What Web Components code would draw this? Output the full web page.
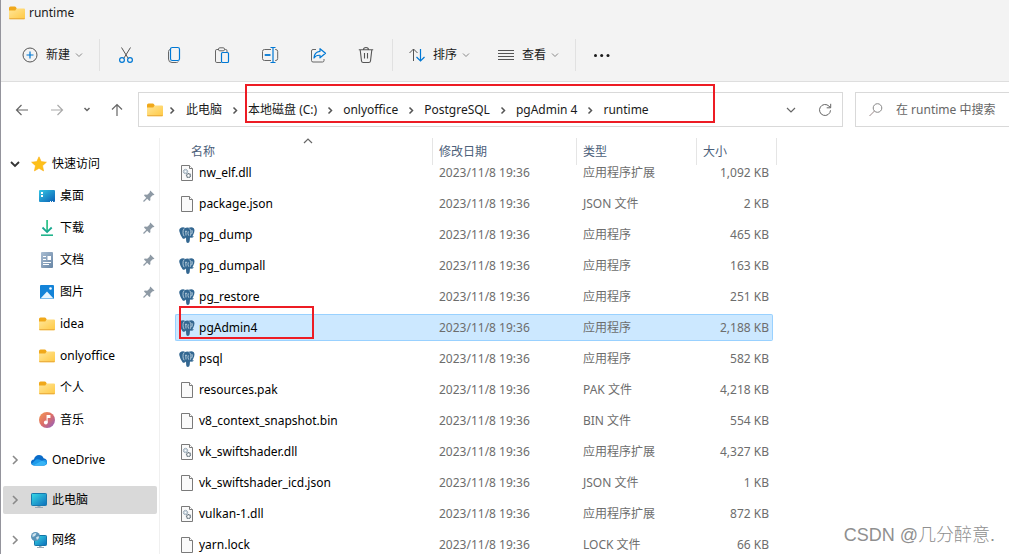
<!DOCTYPE html>
<html lang="zh-CN">
<head>
<meta charset="utf-8">
<title>runtime</title>
<style>
html, body { margin: 0; height: 100%; }
body {
  font: 12px/18px "Noto Sans", "Noto Sans CJK SC", sans-serif;
  color: #1a1a1a; background: #fff; overflow: hidden;
}
</style>
</head>
<body>
<file-explorer></file-explorer>

<script>
const RESET = `
  *, *::before, *::after { box-sizing: border-box; }
  button { font: inherit; color: inherit; background: none; border: 0; padding: 0; margin: 0; }
  a { color: inherit; text-decoration: none; }
`;

const PAGE = '<path d="M2.500.5h8l3 3v12h-11z" fill="#fafafa" stroke="#7a7a7a"/><path d="M10.500.5v3h3" fill="#fff" stroke="#7a7a7a"/>';

const ICONS = {
  folder: '<defs><linearGradient id="g" x1="0" y1="0" x2="1" y2="1"><stop offset="0" stop-color="#ffe69a"/><stop offset="1" stop-color="#ffc943"/></linearGradient></defs><path d="M0 3Q0 1.500 1.500 1.500h4.200q1 0 1.300.8l1 1.700v4H0z" fill="#f0a81a"/><path d="M0 5.500h6.300l1.200-2h7.500q1 0 1 1V13q0 1.200-1.200 1.200H1.200Q0 14.200 0 13z" fill="url(#g)"/><path d="M.3 13.700h15.400" stroke="#e9a93a"/>',
  plus: '<circle cx="8" cy="8" r="7" fill="none" stroke="#555"/><path d="M8 4.500v7M4.500 8h7" stroke="#0078d4" stroke-width="1.200"/>',
  cut: '<path d="M3.500.5 10.300 11.500M12.500.5 5.700 11.500" stroke="#555" fill="none"/><circle cx="4" cy="13" r="2.400" fill="none" stroke="#0078d4" stroke-width="1.200"/><circle cx="12" cy="13" r="2.400" fill="none" stroke="#0078d4" stroke-width="1.200"/>',
  copy: '<path d="M4 2.500Q2.500 3 2.500 4.500V12q0 3.500 3.500 3.500h4.500q1.300 0 1.800-1" fill="none" stroke="#666"/><rect x="4.500" y=".5" width="9" height="13" rx="1.800" fill="none" stroke="#0078d4" stroke-width="1.200"/>',
  paste: '<path d="M5 2.500H2.800Q1.500 2.500 1.500 3.800v10.400q0 1.300 1.300 1.300H7M10.500 2.500h1.200q1.300 0 1.300 1.300V5" fill="none" stroke="#666"/><rect x="4.500" y=".8" width="6" height="3" rx="1.300" fill="none" stroke="#666"/><rect x="7.500" y="5.500" width="7" height="10" rx="1" fill="none" stroke="#0078d4" stroke-width="1.200"/>',
  rename: '<path d="M9 2.500H2.500Q.5 2.500.5 4.500v7q0 2 2 2H9M13 2.500h.7q2 0 2 2v7q0 2-2 2H13" fill="none" stroke="#666"/><path d="M2.700 8h5.800" stroke="#0078d4" stroke-width="1.800"/><path d="M11 .5v15M8.500.5h5M8.500 15.500h5" stroke="#0078d4" stroke-width="1.200"/>',
  share: '<path d="M6 2.500H3Q1.500 2.500 1.500 4v9.500Q1.500 15 3 15h9.500q1.500 0 1.500-1.500V12" fill="none" stroke="#666"/><path d="M10 1.700 15.500 6.300 10 10.800V8.300Q6 8 4 11q.2-6 6-6.700z" fill="none" stroke="#0078d4" stroke-width="1.200" stroke-linejoin="round"/>',
  trash: '<path d="M.8 2.800h14.400M5.500 2.800Q5.500.5 8 .5t2.500 2.300M2.200 3l1.300 11q.2 1.500 1.700 1.500h5.600q1.500 0 1.700-1.500L13.800 3M6.500 6v5.500M9.500 6v5.500" fill="none" stroke="#555" stroke-width="1.100"/>',
  sort: '<path d="M4.500 14V2M.5 6l4-4 4 4" fill="none" stroke="#555"/><path d="M11.500 2v12M7.500 10l4 4 4-4" fill="none" stroke="#0078d4" stroke-width="1.200"/>',
  view: '<path d="M0 3.500h16M0 6.500h16M0 9.500h16M0 12.500h16" stroke="#555"/>',
  more: '<circle cx="1.500" cy="8.500" r="1.500" fill="#1a1a1a"/><circle cx="7.700" cy="8.500" r="1.500" fill="#1a1a1a"/><circle cx="14" cy="8.500" r="1.500" fill="#1a1a1a"/>',
  down: '<path d="m4 6 4 4 4-4" fill="none" stroke="#666" stroke-width="1.200"/>',
  smalldown: '<path d="m5 6.500 3 3 3-3" fill="none" stroke="#888"/>',
  bolddown: '<path d="m4 6 4 4 4-4" fill="none" stroke="#333" stroke-width="1.800"/>',
  history: '<path d="m5.500 6 2.500 2.500L10.500 6" fill="none" stroke="#666" stroke-width="1.500"/>',
  right: '<path d="m6.500 5.500 3 3-3 3" fill="none" stroke="#555" stroke-width="1.500"/>',
  expand: '<path d="m6 4 4 4-4 4" fill="none" stroke="#8a8a8a" stroke-width="1.600"/>',
  caretup: '<path d="m4 10 4-4 4 4" fill="none" stroke="#666" stroke-width="1.200"/>',
  back: '<path d="M14 8H2.500M7.500 3l-5 5 5 5" fill="none" stroke="#666" stroke-width="1.200"/>',
  forward: '<path d="M2 8h11.500M8.500 3l5 5-5 5" fill="none" stroke="#aaa" stroke-width="1.200"/>',
  up: '<path d="M8 14V2.500M3 7.500l5-5 5 5" fill="none" stroke="#666" stroke-width="1.200"/>',
  refresh: '<path d="M13.500 8.300A5.500 5.500 0 1 1 12 4.200l1.500 1.300M13.700 1.800v4h-4" fill="none" stroke="#666"/>',
  search: '<circle cx="9.500" cy="6" r="4.300" fill="none" stroke="#888"/><path d="m6.500 9-5 5" stroke="#988"/>',
  star: '<path d="M8 .8l2.200 4.800 5.200.6-3.900 3.500 1.100 5.200L8 12.300l-4.600 2.600 1.100-5.200L.6 6.200l5.200-.6z" fill="#fdc01a" stroke="#fbaf13" stroke-width=".6" stroke-linejoin="round"/>',
  desktop: '<defs><linearGradient id="g" x1="0" y1="0" x2="1" y2="1"><stop offset="0" stop-color="#34c6e4"/><stop offset="1" stop-color="#0a5fb4"/></linearGradient></defs><rect y="2" width="16" height="12" rx="1" fill="url(#g)"/><path d="M2 4h2v2H2zM2 7h2v2H2z" fill="#fff"/><path d="M11 13.500h4" stroke="#fff" stroke-dasharray="1 1"/>',
  download: '<path d="M7.200 0h1.800v12H7.200z" fill="#35c48c"/><path d="m3.500 7.500 4.600 4.600 4.600-4.600" fill="none" stroke="#18a78f" stroke-width="1.800"/><path d="M2 15.200h12" stroke="#22b58c" stroke-width="1.600"/>',
  document: '<defs><linearGradient id="g" x1="0" y1="0" x2="1" y2="1"><stop offset="0" stop-color="#a9bdd2"/><stop offset="1" stop-color="#6785a5"/></linearGradient></defs><rect x="2" width="12" height="16" rx="1" fill="url(#g)"/><path d="M4 4.500h3M4 7.500h3M4 10.500h8M4 12.500h6" stroke="#fff"/><path d="M8.500 4h3.500v4H8.500z" fill="#fff"/>',
  picture: '<rect x="1" y="1" width="14" height="14" rx="1" fill="#1383d8"/><path d="M1.500 14.500 8 7.500l6.500 7z" fill="#e6f5ff"/><circle cx="11.500" cy="4.500" r="1.300" fill="#fff"/>',
  music: '<defs><linearGradient id="g" x1="0" y1="0" x2="1" y2="1"><stop offset="0" stop-color="#f49a54"/><stop offset=".5" stop-color="#dc6d68"/><stop offset="1" stop-color="#8a5fc8"/></linearGradient></defs><circle cx="8" cy="8" r="8" fill="url(#g)"/><circle cx="6.800" cy="10.500" r="1.900" fill="#fff"/><path d="M8.100 10.500V3.500h2.800v2H8.100" fill="#fff" stroke="#fff" stroke-width="1.100"/>',
  cloud: '<path d="M3.500 13.500Q0 13.300 0 10.500q0-2.600 2.900-3Q4 3 8 3q3.300 0 4.600 3.300Q16 6.700 16 10t-3.500 3.500z" fill="#0a6cc9"/><path d="M5 7.500q3-1 6 1.300 1.500-1 3.300-.8Q16 8.700 16 10.500q0 3-3.500 3H4q-2.500 0-3.500-1.500z" fill="#1f9bea"/><path d="M2.500 13.200 11 8.800q4.500 1.400 4 3-1 1.700-3 1.700H4z" fill="#38b4f5"/>',
  pc: '<defs><linearGradient id="g" x1="0" y1="0" x2="1" y2="1"><stop offset="0" stop-color="#37dbe6"/><stop offset="1" stop-color="#0e6dbb"/></linearGradient></defs><path d="M6.500 13h3v2h-3z" fill="#9aa9b5"/><path d="M4 15.500h8" stroke="#9aa9b5"/><rect x=".5" y="1.500" width="15" height="12" rx=".8" fill="url(#g)" stroke="#1779ae"/>',
  network: '<defs><linearGradient id="g" x1="0" y1="0" x2="1" y2="1"><stop offset="0" stop-color="#37dbe6"/><stop offset="1" stop-color="#0e6dbb"/></linearGradient></defs><path d="M8 13h2.500v2H8z" fill="#9aa9b5"/><path d="M6 15.500h7" stroke="#9aa9b5"/><rect x="3.500" y="3.500" width="12" height="10" rx=".8" fill="url(#g)" stroke="#1476a8"/><circle cx="4.500" cy="4.500" r="4.500" fill="#5a93b8"/><path d="M1.500 2.500Q4 0 5.500 1.500L4 4 1.500 5zM5 5.500l2.500-1.500.5 2-2 2z" fill="#cfe4ee"/>',
  pin: '<path d="m9.300 2.500 4.200 4.200-1.400.6-.8.2-2 2.300.1 2.500-1 .7-5.400-5.400.7-1 2.500.1 2.300-2 .2-.8z" fill="#8e9aa5"/><path d="m6 10-3.500 3.500" stroke="#8e9aa5" stroke-width="1.300"/>',
  page: PAGE,
  dll: PAGE + '<circle cx="6.500" cy="6.500" r="2.200" fill="#c5d2dc" stroke="#93a1ad" stroke-dasharray="1.200 .4"/><circle cx="6.500" cy="6.500" r=".8" fill="#fff"/><circle cx="9.500" cy="10.500" r="1.900" fill="#fff" stroke="#68767f" stroke-width="1.400" stroke-dasharray="1.200 .3"/>',
  postgres: '<path d="M2.500.5Q5 0 6 .9 8 .2 9.800.8 12.800-.3 14.800 1.200 16 2.500 15.200 5.200 14.300 7.800 13.300 9.300l1.700.1q-1.200 1.500-4 1.200l-.3 3.400Q10.500 16 8.700 16 7.300 16 7.200 14.200L7 10.500Q5.200 12.500 3.500 11.200 1.300 8.500.4 4.600-.4 1.500 2.500.5z" fill="#336791"/><path d="M5.200 1.500Q3.800 3.200 4 5.700q.2 2.600 1.200 3.500M6.800 4.600 7 8.500M6 4.500q1-.8 2 0M10.200 1.500q2.300 1.200 1.700 4-.3 2-.6 3.300M9.300 4.300q-.8 2.200.3 4.300M13 3.200q.8 1.800-.4 4" fill="none" stroke="#cfdfea" stroke-width=".8"/>'
};

class FxIcon extends HTMLElement {
  constructor() { super(); this.attachShadow({ mode: 'open' }); }
  connectedCallback() {
    this.shadowRoot.innerHTML = `<style>
      :host { display: block; flex: none; width: 16px; height: 16px; }
      svg { display: block; width: 100%; height: 100%; overflow: visible; }
    </style><svg viewBox="0 0 16 16" aria-hidden="true">${ICONS[this.getAttribute('name')]}</svg>`;
  }
}

class ToolButton extends HTMLElement {
  constructor() { super(); this.attachShadow({ mode: 'open' }); }
  connectedCallback() {
    const menu = this.hasAttribute('menu');
    this.shadowRoot.innerHTML = `<style>${RESET}
      :host { display: block; flex: none; }
      button { display: flex; align-items: center; justify-content: center; gap: 8px; height: 32px; width: 48px; }
      button.menu { width: auto; padding: 0 14px; }
      .chev { width: 16px; margin: 0 -4px 0 -7px; }
    </style>
    <button type="button" class="${menu ? 'menu' : ''}" aria-label="${this.getAttribute('label')}">
      <fx-icon name="${this.getAttribute('icon')}"></fx-icon><slot></slot>
      ${menu ? '<fx-icon class="chev" name="smalldown"></fx-icon>' : ''}
    </button>`;
  }
}

class CommandBar extends HTMLElement {
  constructor() {
    super();
    this.attachShadow({ mode: 'open' }).innerHTML = `<style>${RESET}
      :host { display: block; background: #f3f3f3; border-bottom: 1px solid #dedede; }
      .title { display: flex; align-items: center; gap: 4px; height: 25px; padding-left: 8px; margin-bottom: 4px; }
      .bar { display: flex; align-items: center; height: 52px; padding-left: 7px; }
      i { width: 1px; height: 32px; margin: 0 2px; background: #e1e1e1; }
    </style>
    <div class="title"><fx-icon name="folder"></fx-icon><span>runtime</span></div>
    <div class="bar">
      <tool-button menu icon="plus" label="新建">新建</tool-button><i></i>
      <tool-button icon="cut" label="剪切"></tool-button>
      <tool-button icon="copy" label="复制"></tool-button>
      <tool-button icon="paste" label="粘贴"></tool-button>
      <tool-button icon="rename" label="重命名"></tool-button>
      <tool-button icon="share" label="共享"></tool-button>
      <tool-button icon="trash" label="删除"></tool-button><i></i>
      <tool-button menu icon="sort" label="排序">排序</tool-button>
      <tool-button menu icon="view" label="查看">查看</tool-button><i></i>
      <tool-button icon="more" label="更多"></tool-button>
    </div>`;
  }
}

class AddressBar extends HTMLElement {
  constructor() {
    super();
    const crumbs = ['此电脑', '本地磁盘 (C:)', 'onlyoffice', 'PostgreSQL', 'pgAdmin 4', 'runtime'];
    this.attachShadow({ mode: 'open' }).innerHTML = `<style>${RESET}
      :host { display: flex; padding: 10px 0 11px 3px; }
      .nav { display: flex; margin-right: 4px; }
      .nav button { display: grid; place-items: center; width: 35px; }
      .nav button.narrow { width: 25px; }
      .path { position: relative; display: flex; align-items: center; flex: 1; min-width: 0; height: 35px; border: 1px solid #d9d9d9; padding: 0 9px 0 8px; }
      ol { display: flex; align-items: center; list-style: none; margin: 0; padding: 0; flex: 1; white-space: nowrap; }
      li { display: flex; align-items: center; }
      li fx-icon { margin: 0 5px; }
      li:first-child fx-icon { margin: 0 6px 0 1px; }
      .path > button { margin-left: 18px; }
      .mark { position: absolute; left: 106px; top: -9px; width: 470px; height: 39px; border: 2px solid #ed1c24; pointer-events: none; }
      label { display: flex; align-items: center; gap: 12px; flex: 0 0 154px; height: 35px; margin-left: 12px; border: 1px solid #d9d9d9; border-right: 0; padding-left: 12px; }
      input { font: inherit; color: #666; border: 0; outline: 0; padding: 0; width: 100%; min-width: 0; background: none; }
      input::placeholder { color: #666; opacity: 1; }
    </style>
    <nav class="nav" aria-label="导航">
      <button type="button" aria-label="后退"><fx-icon name="back"></fx-icon></button>
      <button type="button" aria-label="前进"><fx-icon name="forward"></fx-icon></button>
      <button type="button" class="narrow" aria-label="最近的位置"><fx-icon name="history"></fx-icon></button>
      <button type="button" aria-label="向上"><fx-icon name="up"></fx-icon></button>
    </nav>
    <div class="path">
      <fx-icon name="folder"></fx-icon>
      <ol>${crumbs.map(c => `<li><fx-icon name="right"></fx-icon><a href="#">${c}</a></li>`).join('')}</ol>
      <button type="button" aria-label="以前的位置"><fx-icon name="down"></fx-icon></button>
      <button type="button" aria-label="刷新"><fx-icon name="refresh"></fx-icon></button>
      <div class="mark"></div>
    </div>
    <label><fx-icon name="search"></fx-icon><input type="search" aria-label="搜索" placeholder="在 runtime 中搜索"></label>`;
  }
}

class NavItem extends HTMLElement {
  constructor() { super(); this.attachShadow({ mode: 'open' }); }
  connectedCallback() {
    const tree = this.getAttribute('tree');
    this.shadowRoot.innerHTML = `<style>${RESET}
      :host { display: block; color: #000; }
      a { display: flex; align-items: center; height: 28px; padding: 0 0 0 36px; border-radius: 2px; }
      a.root { padding-left: 4px; }
      :host([selected]) a { background: #d9d9d9; }
      .text { flex: 1; margin-left: 5px; }
      .tree { margin-right: 8px; }
    </style>
    <a href="#" class="${tree ? 'root' : ''}">
      ${tree ? `<fx-icon class="tree" name="${tree}"></fx-icon>` : ''}
      <fx-icon name="${this.getAttribute('icon')}"></fx-icon>
      <span class="text"><slot></slot></span>
      ${this.hasAttribute('pinned') ? '<fx-icon name="pin"></fx-icon>' : ''}
    </a>`;
  }
}

class NavPane extends HTMLElement {
  constructor() {
    super();
    this.attachShadow({ mode: 'open' }).innerHTML = `<style>${RESET}
      :host { display: flex; flex-direction: column; gap: 12px; flex: 0 0 159px; padding: 12px 2px 0; border-right: 1px solid #f0f0f0; overflow: hidden; }
      div { display: flex; flex-direction: column; gap: 4px; }
    </style>
    <div>
      <nav-item tree="bolddown" icon="star">快速访问</nav-item>
      <nav-item icon="desktop" pinned>桌面</nav-item>
      <nav-item icon="download" pinned>下载</nav-item>
      <nav-item icon="document" pinned>文档</nav-item>
      <nav-item icon="picture" pinned>图片</nav-item>
      <nav-item icon="folder">idea</nav-item>
      <nav-item icon="folder">onlyoffice</nav-item>
      <nav-item icon="folder">个人</nav-item>
      <nav-item icon="music">音乐</nav-item>
    </div>
    <nav-item tree="expand" icon="cloud">OneDrive</nav-item>
    <nav-item tree="expand" icon="pc" selected>此电脑</nav-item>
    <nav-item tree="expand" icon="network">网络</nav-item>`;
  }
}

const FILES = [
  ['dll', 'nw_elf.dll', '应用程序扩展', '1,092 KB'],
  ['page', 'package.json', 'JSON 文件', '2 KB'],
  ['postgres', 'pg_dump', '应用程序', '465 KB'],
  ['postgres', 'pg_dumpall', '应用程序', '163 KB'],
  ['postgres', 'pg_restore', '应用程序', '251 KB'],
  ['postgres', 'pgAdmin4', '应用程序', '2,188 KB'],
  ['postgres', 'psql', '应用程序', '582 KB'],
  ['page', 'resources.pak', 'PAK 文件', '4,218 KB'],
  ['page', 'v8_context_snapshot.bin', 'BIN 文件', '554 KB'],
  ['dll', 'vk_swiftshader.dll', '应用程序扩展', '4,327 KB'],
  ['page', 'vk_swiftshader_icd.json', 'JSON 文件', '1 KB'],
  ['dll', 'vulkan-1.dll', '应用程序扩展', '872 KB'],
  ['page', 'yarn.lock', 'LOCK 文件', '66 KB']
];

class FileList extends HTMLElement {
  constructor() {
    super();
    const rows = FILES.map(([icon, name, type, size]) => {
      const on = name === 'pgAdmin4';
      return `<tr class="${on ? 'selected' : ''}">
        <td><div class="name"><fx-icon name="${icon}"></fx-icon><span>${name}</span>${on ? '<b class="mark"></b>' : ''}</div></td>
        <td><div>2023/11/8 19:36</div></td><td><div>${type}</div></td><td><div class="size">${size}</div></td></tr>`;
    }).join('');
    this.attachShadow({ mode: 'open' }).innerHTML = `<style>${RESET}
      :host { display: block; flex: 1; min-width: 0; padding-left: 15px; overflow: auto; scrollbar-width: none; }
      table { border-collapse: separate; border-spacing: 0; table-layout: fixed; width: 602px; }
      th { position: sticky; top: 0; z-index: 2; height: 27px; padding: 0 0 0 6px; text-align: left; vertical-align: middle; font-weight: normal; color: #4c607a; background: #fff; border-right: 1px solid #e5e5e5; }
      th:first-child { padding-left: 16px; }
      th fx-icon { position: absolute; left: 125px; top: -5px; }
      td { padding: 2px 0; color: #6d6d6d; }
      td div { display: flex; align-items: center; height: 27px; padding-left: 6px; border: 0 solid #99d1ff; white-space: nowrap; }
      td .name { position: relative; gap: 4px; color: #000; padding-left: 4px; }
      td .size { justify-content: flex-end; margin-right: 4px; padding-right: 4px; }
      .selected div { background: #cce8ff; border-width: 1px 0; }
      .selected .name { border-left-width: 1px; padding-left: 3px; border-radius: 2px 0 0 2px; }
      .selected .size { border-right-width: 1px; padding-right: 3px; border-radius: 0 2px 2px 0; }
      .mark { position: absolute; left: 3px; top: -9px; width: 135px; height: 33px; border: 2px solid #ed1c24; }
    </style>
    <table>
      <colgroup><col style="width:258px"><col style="width:144px"><col style="width:120px"><col style="width:80px"></colgroup>
      <thead><tr><th>名称<fx-icon name="caretup"></fx-icon></th><th>修改日期</th><th>类型</th><th>大小</th></tr></thead>
      <tbody>${rows}</tbody>
    </table>`;
  }
  connectedCallback() { this.scrollTop = 8; requestAnimationFrame(() => { this.scrollTop = 8; }); }
}

class FileExplorer extends HTMLElement {
  constructor() {
    super();
    this.attachShadow({ mode: 'open' }).innerHTML = `<style>${RESET}
      :host { position: relative; display: flex; flex-direction: column; height: 100vh; border-left: 1px solid #94949c; }
      main { display: flex; flex: 1; min-height: 0; }
      .credit { position: absolute; right: 14px; bottom: 7px; font: 18px/24px "Liberation Sans", "Noto Sans CJK SC", sans-serif; font-weight: 300; color: #8f8f8f; }
    </style>
    <command-bar></command-bar>
    <address-bar></address-bar>
    <main><nav-pane></nav-pane><file-list></file-list></main>
    <div class="credit">CSDN @几分醉意.</div>`;
  }
}

customElements.define('fx-icon', FxIcon);
customElements.define('tool-button', ToolButton);
customElements.define('command-bar', CommandBar);
customElements.define('address-bar', AddressBar);
customElements.define('nav-item', NavItem);
customElements.define('nav-pane', NavPane);
customElements.define('file-list', FileList);
customElements.define('file-explorer', FileExplorer);
</script>
</body>
</html>
